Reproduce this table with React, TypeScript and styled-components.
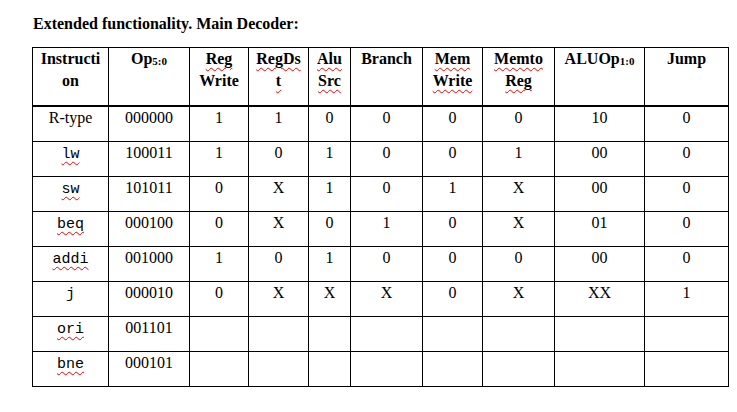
import React from 'react';
import styled, { createGlobalStyle } from 'styled-components';

const Global = createGlobalStyle`
  body {
    margin: 0;
    background: #fff;
    font-family: "Liberation Serif", "Times New Roman", serif;
    color: #000;
  }
`;

const Page = styled.div`
  padding: 13px 0 0 32px;
`;

const Title = styled.h1`
  margin: 0 0 12px 1px;
  font-size: 16px;
  line-height: 22px;
  font-weight: bold;
`;

const Table = styled.table`
  border-collapse: collapse;
  table-layout: fixed;
  width: 697px;
  font-size: 16px;
  line-height: 22px;
`;

const Col = styled.col<{ $w: number }>`
  width: ${(p) => p.$w}px;
`;

const Head = styled.th`
  border: 1px solid #000;
  border-bottom: 2px solid #000;
  height: 57px;
  padding: 0 2px;
  vertical-align: top;
  text-align: center;
  font-weight: bold;
`;

const Cell = styled.td`
  border: 1px solid #000;
  height: 34px;
  padding: 0;
  vertical-align: top;
  text-align: center;
`;

const Sub = styled.span`
  font-size: 11px;
  vertical-align: -1px;
`;

const Squiggle = styled.span`
  text-decoration: underline wavy #e00;
  text-decoration-thickness: 1px;
  text-underline-offset: 3px;
`;

const Code = styled(Squiggle)<{ $plain?: boolean }>`
  font-family: "Liberation Mono", "Courier New", monospace;
  font-size: 15px;
  ${(p) => (p.$plain ? 'text-decoration: none;' : '')}
`;

const widths = [76, 81, 59, 60, 42, 72, 60, 72, 90, 84];

const rows: { name: string; plain?: boolean; mono: boolean; op: string; vals: string[] }[] = [
  { name: 'R-type', mono: false, op: '000000', vals: ['1', '1', '0', '0', '0', '0', '10', '0'] },
  { name: 'lw', mono: true, op: '100011', vals: ['1', '0', '1', '0', '0', '1', '00', '0'] },
  { name: 'sw', mono: true, op: '101011', vals: ['0', 'X', '1', '0', '1', 'X', '00', '0'] },
  { name: 'beq', mono: true, op: '000100', vals: ['0', 'X', '0', '1', '0', 'X', '01', '0'] },
  { name: 'addi', mono: true, op: '001000', vals: ['1', '0', '1', '0', '0', '0', '00', '0'] },
  { name: 'j', mono: true, plain: true, op: '000010', vals: ['0', 'X', 'X', 'X', '0', 'X', 'XX', '1'] },
  { name: 'ori', mono: true, op: '001101', vals: ['', '', '', '', '', '', '', ''] },
  { name: 'bne', mono: true, op: '000101', vals: ['', '', '', '', '', '', '', ''] },
];

export default function App() {
  return (
    <Page>
      <Global />
      <Title>Extended functionality. Main Decoder:</Title>
      <Table>
        <colgroup>
          {widths.map((w, i) => (
            <Col key={i} $w={w} />
          ))}
        </colgroup>
        <thead>
          <tr>
            <Head>Instructi on</Head>
            <Head>
              Op<Sub>5:0</Sub>
            </Head>
            <Head>
              <Squiggle>Reg</Squiggle>
              <br />
              Write
            </Head>
            <Head>
              <Squiggle>RegDs</Squiggle>
              <br />
              <Squiggle>t</Squiggle>
            </Head>
            <Head>
              <Squiggle>Alu</Squiggle>
              <br />
              <Squiggle>Src</Squiggle>
            </Head>
            <Head>Branch</Head>
            <Head>
              <Squiggle>Mem</Squiggle>
              <br />
              <Squiggle>Write</Squiggle>
            </Head>
            <Head>
              <Squiggle>Memto</Squiggle>
              <br />
              <Squiggle>Reg</Squiggle>
            </Head>
            <Head>
              ALUOp<Sub>1:0</Sub>
            </Head>
            <Head>Jump</Head>
          </tr>
        </thead>
        <tbody>
          {rows.map((r) => (
            <tr key={r.name}>
              <Cell>{r.mono ? <Code $plain={r.plain}>{r.name}</Code> : r.name}</Cell>
              <Cell>{r.op}</Cell>
              {r.vals.map((v, i) => (
                <Cell key={i}>{v}</Cell>
              ))}
            </tr>
          ))}
        </tbody>
      </Table>
    </Page>
  );
}
